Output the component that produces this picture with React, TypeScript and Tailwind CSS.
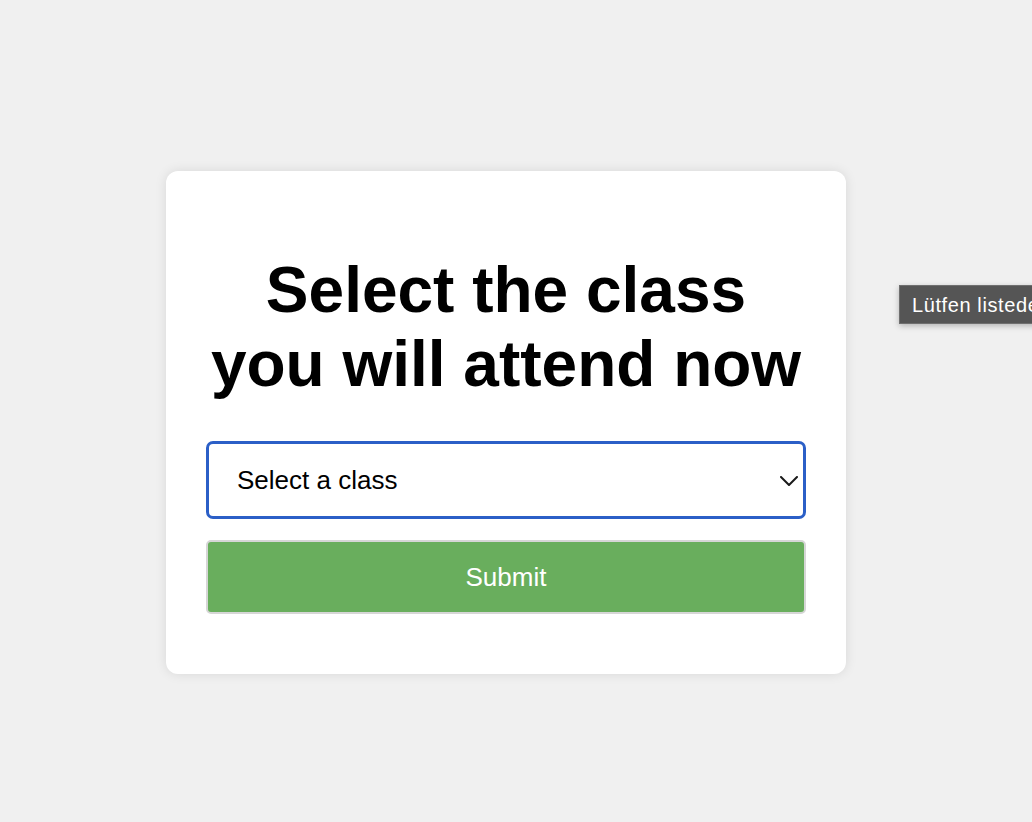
import React from "react";

export default function App() {
  return (
    <div
      className="relative w-[1032px] h-[822px] overflow-hidden bg-[#f0f0f0] pt-[171px] pl-[166px]"
      style={{ fontFamily: '"Liberation Sans", Arial, sans-serif' }}
    >
      <div className="w-[680px] rounded-[12px] bg-white px-[40px] pt-[40px] pb-[40px] shadow-[0_0_12px_rgba(0,0,0,0.10)]">
        <h1 className="mt-[43px] mb-[40px] text-center text-[64px] font-bold leading-[73.6px] text-black">
          Select the class
          <br />
          you will attend now
        </h1>
        <div className="relative">
          <select
            className="block h-[78px] w-[600px] appearance-none rounded-[7px] border-[3px] border-[#2b5fc7] bg-white pl-[28px] text-[26px] text-black outline-none"
            defaultValue=""
            style={{ fontFamily: '"Liberation Sans", Arial, sans-serif' }}
          >
            <option value="">Select a class</option>
          </select>
          <svg
            className="pointer-events-none absolute left-[574px] top-[35px]"
            width="18"
            height="10"
            viewBox="0 0 18 10"
            fill="none"
          >
            <path d="M1 1l8 8 8-8" stroke="#1a1a1a" strokeWidth="2" strokeLinecap="round" strokeLinejoin="round" />
          </svg>
        </div>
        <button
          className="mt-[21px] mb-[20px] flex h-[74px] w-[600px] items-center justify-center rounded-[5px] border-2 border-[#d6d6d6] bg-[#69ae5d] text-[26px] text-white"
          style={{ fontFamily: '"Liberation Sans", Arial, sans-serif' }}
        >
          Submit
        </button>
      </div>

      <div className="absolute left-[899px] top-[285px] flex h-[39px] items-center whitespace-nowrap border border-[#6f6f6f] bg-[#555555] pl-[12px] pr-[12px] text-[20px] tracking-[0.6px] text-white shadow-[0_2px_6px_rgba(0,0,0,0.25)]">
        Lütfen listeden bir öğe seçin.
      </div>
    </div>
  );
}
